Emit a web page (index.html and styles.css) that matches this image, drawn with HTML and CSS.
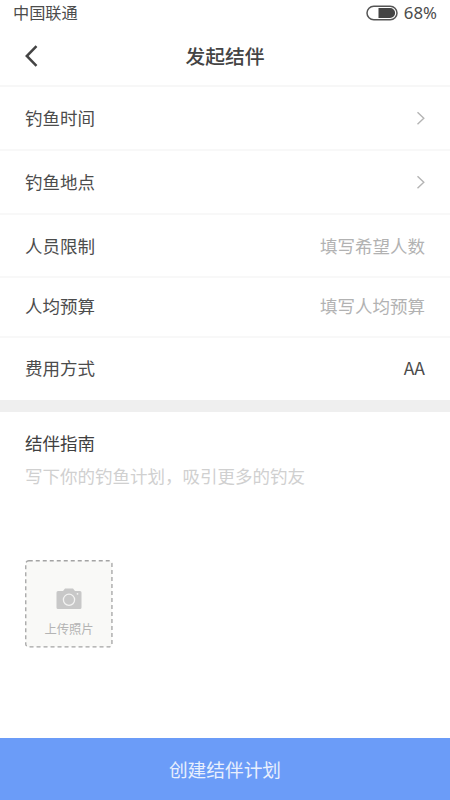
FILE: index.html
```html
<!DOCTYPE html>
<html lang="zh-CN">
<head>
<meta charset="utf-8">
<title>发起结伴</title>
<link rel="stylesheet" href="styles.css">
</head>
<body>
<div class="status"><span class="carrier">中国联通</span>
<span class="power"><svg width="32" height="16" viewBox="0 0 32 16"><rect x="1" y="1.2" width="30" height="13.6" rx="6.8" fill="none" stroke="#555" stroke-width="1.5"/><path d="M12.5 3h11.600a5 5 0 0 1 0 10H12.500z" fill="#444"/></svg><span>68%</span></span></div>
<header class="nav"><svg class="back" width="14" height="22" viewBox="0 0 14 22"><path d="M11.5 1.2 1.8 11l9.7 9.8" fill="none" stroke="#444" stroke-width="2.5"/></svg><h1>发起结伴</h1></header>
<main>
<div class="row r1"><span>钓鱼时间</span><svg width="10" height="14" viewBox="0 0 10 14"><path d="M2.5 1.2 8.8 7.3 2.5 13.2" fill="none" stroke="#b4b4b4" stroke-width="1.4"/></svg></div>
<div class="row r2"><span>钓鱼地点</span><svg width="10" height="14" viewBox="0 0 10 14"><path d="M2.5 1.2 8.8 7.3 2.5 13.2" fill="none" stroke="#b4b4b4" stroke-width="1.4"/></svg></div>
<div class="row r3"><span>人员限制</span><span class="hint">填写希望人数</span></div>
<div class="row r4"><span>人均预算</span><span class="hint">填写人均预算</span></div>
<div class="row r5"><span>费用方式</span><span class="value">AA</span></div>
<section class="guide">
<h2>结伴指南</h2>
<p>写下你的钓鱼计划，吸引更多的钓友</p>
<div class="upload"><svg class="outline" width="88" height="88"><rect x=".75" y=".75" width="86.2" height="86.2" rx="3" fill="#f9f9f7" stroke="#a4a4a4" stroke-width="1.3" stroke-dasharray="4 3"/></svg><svg class="camera" width="26" height="22" viewBox="0 0 26 22"><path d="M2 3h5l2-2.500h8L19 3h5q1.500 0 1.500 1.500v15q0 1.500-1.500 1.500H2Q.5 21 .5 19.500v-15Q.5 3 2 3z" fill="#c8c8c8"/><circle cx="13" cy="11.800" r="5.600" fill="none" stroke="#f3f3f2" stroke-width="1.300"/><circle cx="21.500" cy="5.800" r=".9" fill="#f3f3f2"/></svg><span>上传照片</span></div>
</section>
</main>
<button class="submit">创建结伴计划</button>
</body>
</html>
```
FILE: styles.css
```css
* { box-sizing: border-box; }
body { margin: 0; width: 450px; height: 800px; display: flex; flex-direction: column; background: #fff; color: #4c4c4c; font: 17.5px/26px "Noto Sans CJK SC", sans-serif; overflow: hidden; }
svg { display: block; flex: none; }
.status { height: 26px; padding: 0 13px 1px; display: flex; justify-content: space-between; align-items: center; font-size: 16.2px; }
.carrier { margin-top: -1px; }
.power { display: flex; align-items: center; gap: 6px; font-family: "Noto Sans", sans-serif; font-size: 16.8px; }
.nav { height: 61px; padding: 0 25px; display: grid; grid-template-columns: 20px 1fr 20px; align-items: center; border-bottom: 2px solid #f7f7f7; }
h1 { margin: 0; padding-top: 1px; font-size: 19.8px; font-weight: 500; text-align: center; color: #444; }
main { flex: 1; }
.row { padding: 0 25px; display: flex; justify-content: space-between; align-items: center; border-bottom: 2px solid #f8f8f8; }
.r1 { height: 64px; }
.r2 { height: 64px; padding-bottom: 1px; }
.r3 { height: 63px; padding-top: 1px; }
.r4 { height: 60px; padding-bottom: 2px; }
.r5 { height: 62px; padding-bottom: 2px; border: 0; }
.hint { color: #b2b2b2; }
.guide { border-top: 12px solid #efefef; padding: 18px 25px 0; }
h2, p { margin: 0; font-size: 17.5px; font-weight: 400; }
h2 { color: #404040; }
p { margin-top: 7px; color: #d0d0d0; }
.upload { position: relative; width: 88px; height: 88px; margin-top: 71px; padding-top: 28px; display: flex; flex-direction: column; align-items: center; }
.outline { position: absolute; left: 0; top: 0; }
.camera, .upload span { position: relative; }
.upload span { font-size: 12.3px; line-height: 18px; margin-top: 10px; color: #b4b4b4; }
.submit { height: 62px; border: 0; background: #6b9cf8; color: #e8effd; font: 18.7px/28px "Noto Sans CJK SC", sans-serif; }
```
